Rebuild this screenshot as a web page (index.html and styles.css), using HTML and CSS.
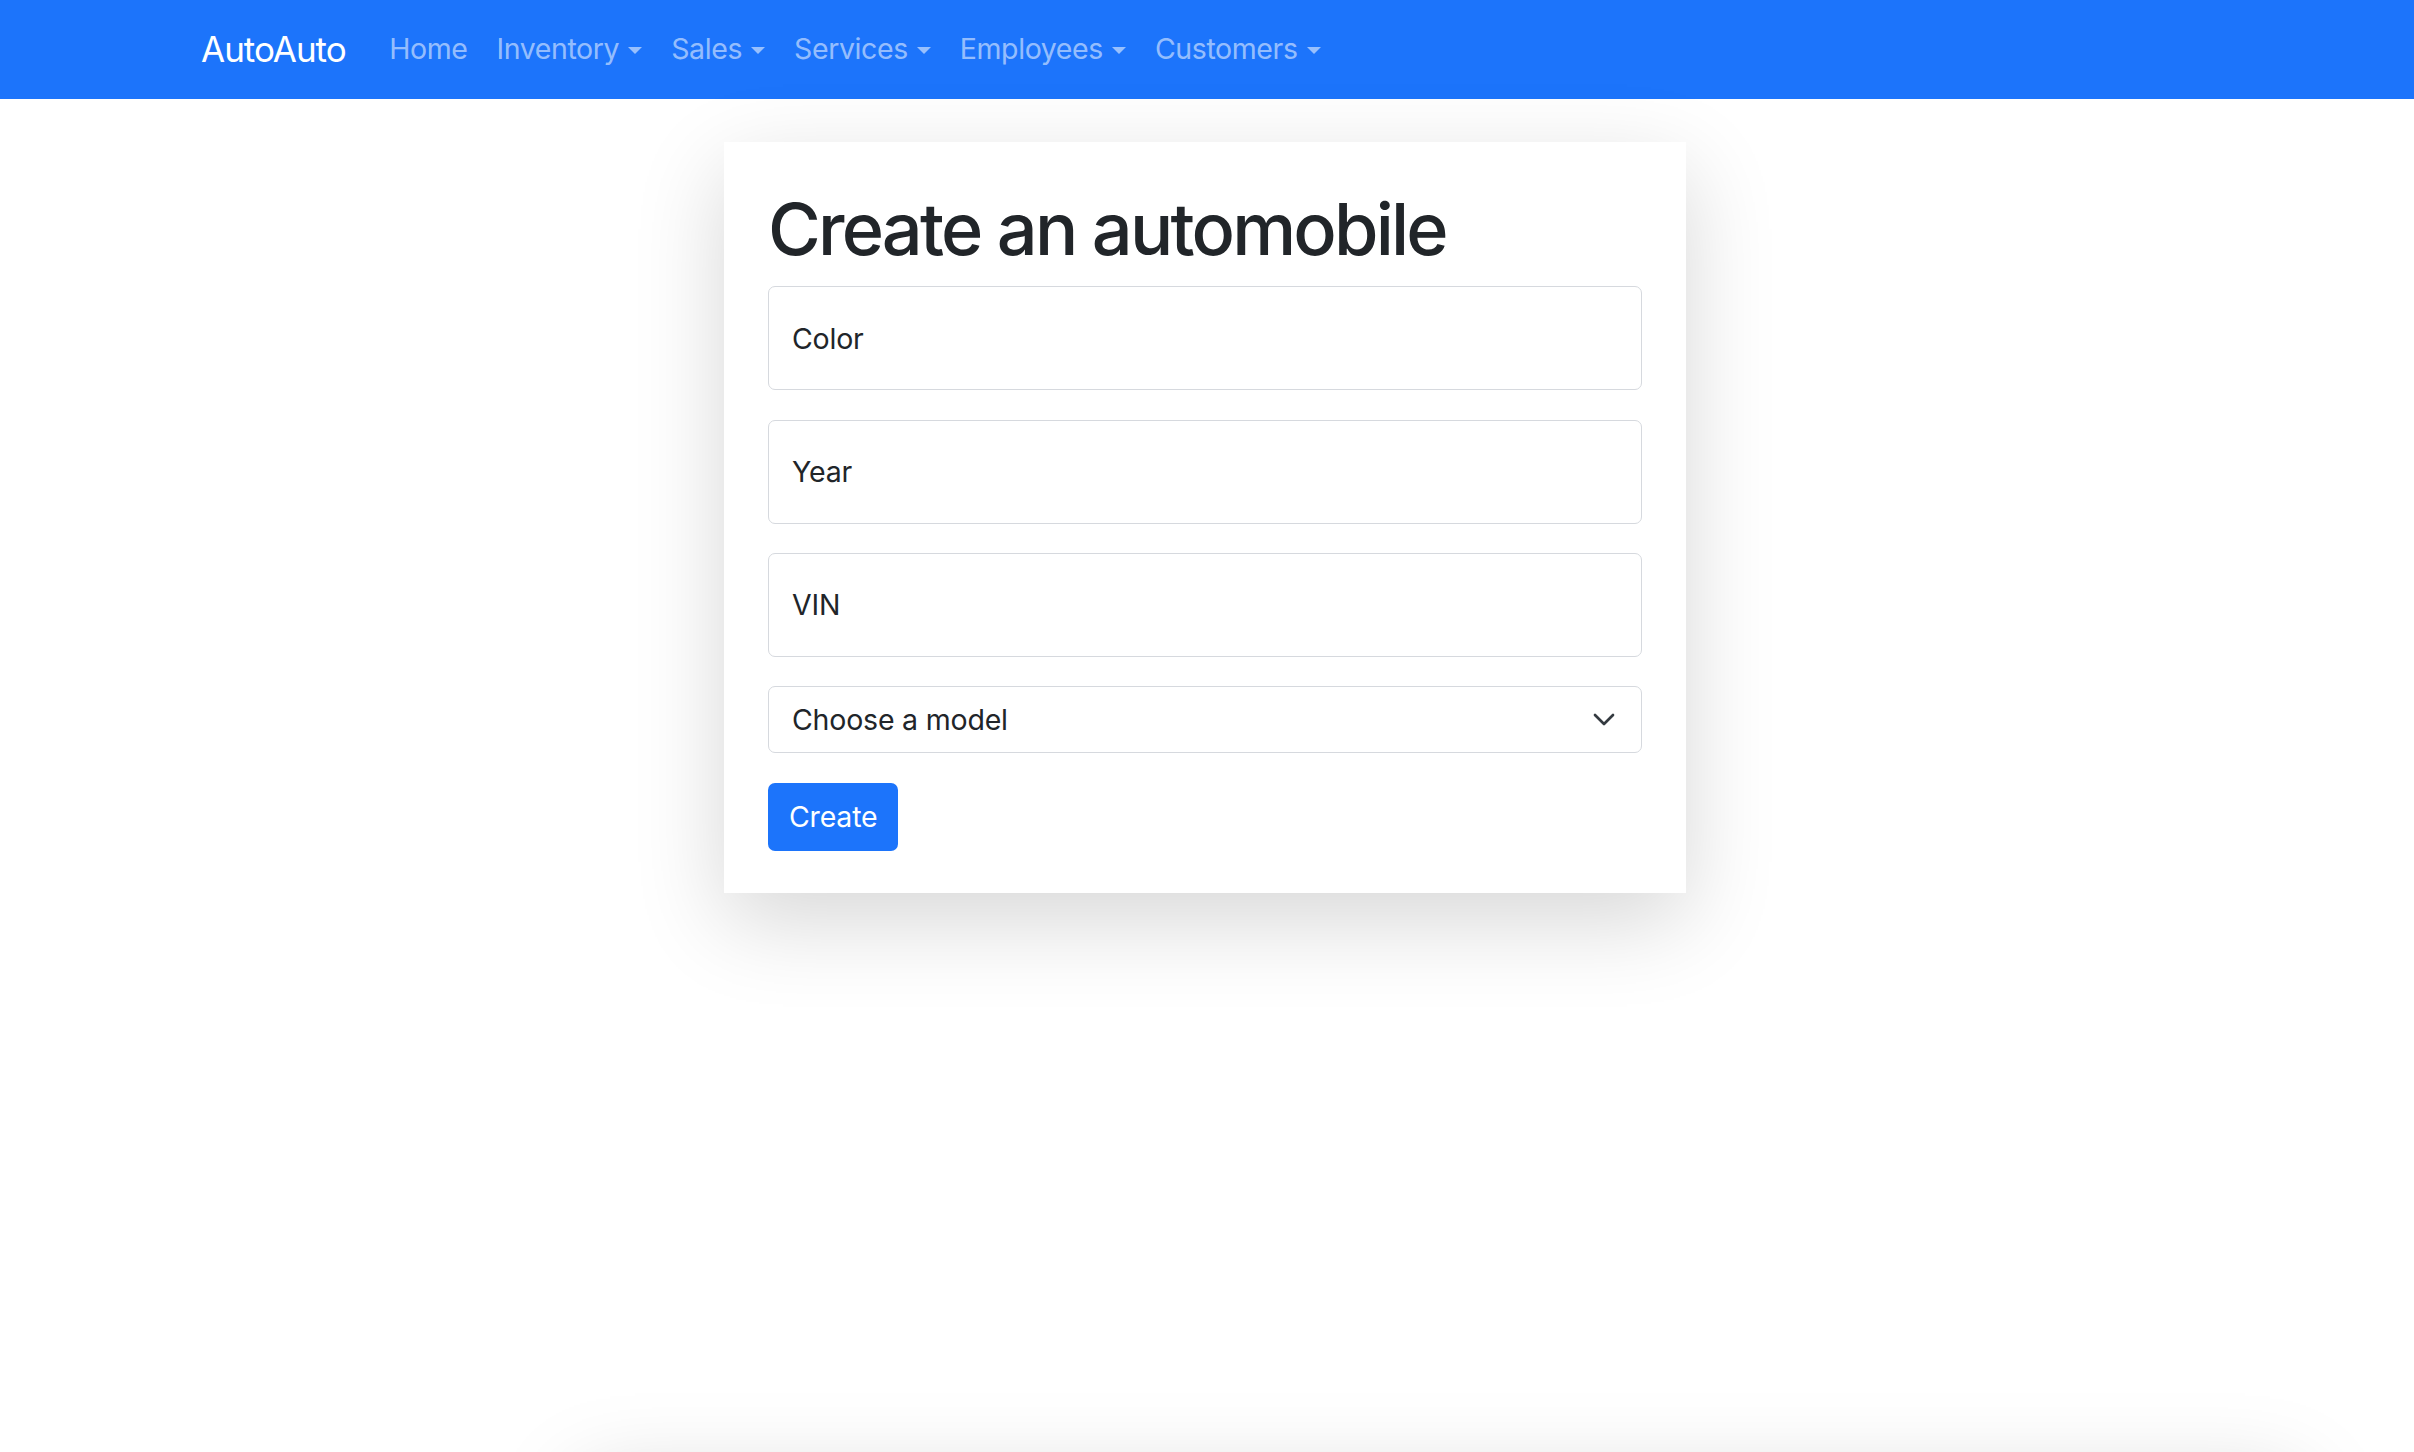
FILE: index.html
```html
<!DOCTYPE html>
<html lang="en">
<head>
<meta charset="utf-8">
<title>AutoAuto</title>
<link rel="stylesheet" href="styles.css">
</head>
<body>
<nav class="navbar">
  <a class="brand" href="#">AutoAuto</a>
  <ul class="nav">
    <li><a class="nav-link" href="#">Home</a></li>
    <li><a class="nav-link dropdown" href="#">Inventory</a></li>
    <li><a class="nav-link dropdown" href="#">Sales</a></li>
    <li><a class="nav-link dropdown" href="#">Services</a></li>
    <li><a class="nav-link dropdown" href="#">Employees</a></li>
    <li><a class="nav-link dropdown" href="#">Customers</a></li>
  </ul>
</nav>
<main class="main">
  <div class="card">
    <h1 class="title">Create an automobile</h1>
    <form class="form">
      <div class="field"><span class="label">Color</span></div>
      <div class="field"><span class="label">Year</span></div>
      <div class="field"><span class="label">VIN</span></div>
      <div class="select">
        <span>Choose a model</span>
        <svg class="chevron" width="22" height="14" viewBox="0 0 22 14"><path d="M2 2 L11 11 L20 2" fill="none" stroke="#343a40" stroke-width="2.7" stroke-linecap="round" stroke-linejoin="round"/></svg>
      </div>
      <div class="actions"><button type="button" class="btn">Create</button></div>
    </form>
  </div>
  <div class="next-panel"></div>
</main>
</body>
</html>
```
FILE: styles.css
```css
html, body {
  margin: 0;
  padding: 0;
  overflow: hidden;
  height: 100%;
  background: #fff;
}
body {
  font-family: Inter, "Liberation Sans", sans-serif;
  color: #212529;
}
.navbar {
  height: 99px;
  background: #1c74fb;
  display: flex;
  align-items: center;
  padding-left: 201px;
  box-sizing: border-box;
}
.brand {
  color: #fff;
  font-size: 35px;
  text-decoration: none;
  margin-right: 29px;
  line-height: 1;
  letter-spacing: -1px;
}
.nav {
  list-style: none;
  display: flex;
  margin: 0;
  padding: 0;
}
.nav-link {
  display: block;
  color: rgba(255, 255, 255, 0.55);
  font-size: 28.5px;
  padding: 0 14.5px;
  text-decoration: none;
  line-height: 1.5;
  letter-spacing: -0.4px;
}
.dropdown::after {
  content: "";
  display: inline-block;
  margin-left: 9px;
  vertical-align: 5px;
  border-top: 7.5px solid rgba(255, 255, 255, 0.55);
  border-left: 7px solid transparent;
  border-right: 7px solid transparent;
}
.main {
  display: flex;
  flex-direction: column;
  align-items: center;
  padding-top: 43px;
}
.card {
  width: 962px;
  box-sizing: border-box;
  padding: 44px 44px 42px;
  background: #fff;
  box-shadow: 0 28px 85px rgba(0, 0, 0, 0.16);
  margin-left: -4px;
}
.title {
  margin: 0 0 14px;
  font-size: 72px;
  font-weight: 500;
  line-height: 1.2;
  letter-spacing: -2.8px;
}
.form {
  display: flex;
  flex-direction: column;
  gap: 29.3px;
}
.field {
  height: 104px;
  border: 1.5px solid #d6d9de;
  border-radius: 7px;
  box-sizing: border-box;
  display: flex;
  align-items: center;
  padding: 0 23px;
  font-size: 28.5px;
  letter-spacing: -0.2px;
}
.select {
  height: 67px;
  border: 1.5px solid #d6d9de;
  border-radius: 7px;
  box-sizing: border-box;
  display: flex;
  align-items: center;
  justify-content: space-between;
  padding: 0 26px 0 23px;
  font-size: 28.5px;
  letter-spacing: -0.2px;
}
.chevron {
  display: block;
}
.actions {
  display: flex;
}
.btn {
  height: 68px;
  padding: 0 21px;
  font-family: inherit;
  font-size: 28.5px;
  letter-spacing: -0.2px;
  color: #fff;
  background: #1c74fb;
  border: none;
  border-radius: 7px;
}
.next-panel {
  flex: none;
  align-self: flex-start;
  width: 1720px;
  height: 300px;
  margin-top: 561px;
  margin-left: 580px;
  background: #fff;
  box-shadow: 0 28px 85px rgba(0, 0, 0, 0.175);
}
```
